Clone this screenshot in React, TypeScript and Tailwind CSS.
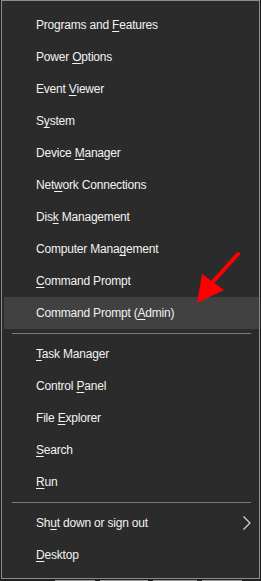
import React from 'react'

type Item = { pre: string; key: string; post: string; active?: boolean; sub?: boolean }

const groups: Item[][] = [
  [
    { pre: 'Programs and ', key: 'F', post: 'eatures' },
    { pre: 'Power ', key: 'O', post: 'ptions' },
    { pre: 'Event ', key: 'V', post: 'iewer' },
    { pre: 'S', key: 'y', post: 'stem' },
    { pre: 'Device ', key: 'M', post: 'anager' },
    { pre: 'Net', key: 'w', post: 'ork Connections' },
    { pre: 'Dis', key: 'k', post: ' Management' },
    { pre: 'Computer Mana', key: 'g', post: 'ement' },
    { pre: '', key: 'C', post: 'ommand Prompt' },
    { pre: 'Command Prompt (', key: 'A', post: 'dmin)', active: true },
  ],
  [
    { pre: '', key: 'T', post: 'ask Manager' },
    { pre: 'Control ', key: 'P', post: 'anel' },
    { pre: 'File ', key: 'E', post: 'xplorer' },
    { pre: '', key: 'S', post: 'earch' },
    { pre: '', key: 'R', post: 'un' },
  ],
  [
    { pre: 'Sh', key: 'u', post: 't down or sign out', sub: true },
    { pre: '', key: 'D', post: 'esktop' },
  ],
]

function Row({ item }: { item: Item }) {
  return (
    <div
      className={`h-[32px] flex items-center pl-[32px] pr-[8px] ${item.active ? 'bg-[#414141]' : ''}`}
    >
      <span className="flex-1 whitespace-pre">
        {item.pre}
        <span className="underline underline-offset-[2px] decoration-1">{item.key}</span>
        {item.post}
      </span>
      {item.sub && (
        <svg width="8" height="14" viewBox="0 0 8 14">
          <polyline points="0.5,0.5 7,7 0.5,13.5" fill="none" stroke="#d8d8d8" strokeWidth="1.2" />
        </svg>
      )}
    </div>
  )
}

export default function App() {
  return (
    <div className="relative w-[261px] h-[581px] bg-[#1e1e1e] overflow-hidden">
      {/* menu panel */}
      <div
        className="ml-[1px] w-[259px] h-[579px] border border-[#8c8c8c] bg-[#2b2b2b] pt-[8px] pl-[2px] text-[12px] tracking-[-0.2px] text-[#f2f2f2]"
        style={{ fontFamily: '"Liberation Sans", Arial, sans-serif' }}
      >
        {groups.map((g, gi) => (
          <div key={gi}>
            {gi > 0 && <div className="my-[4px] mx-[8px] h-px bg-[#7a7a7a]" />}
            {g.map((it) => (
              <Row key={it.pre + it.key + it.post} item={it} />
            ))}
          </div>
        ))}
      </div>

      {/* taskbar peeking below */}
      <div className="mt-[1px] h-px flex">
        <div className="w-[55px]" />
        <div className="w-[40px] bg-[#9a9a9a]" />
        <div className="w-[5px]" />
        <div className="w-[48px] bg-[#9a9a9a]" />
        <div className="w-[5px]" />
        <div className="w-[44px] bg-[#9a9a9a]" />
        <div className="w-[5px]" />
        <div className="w-[40px] bg-[#9a9a9a]" />
      </div>

      {/* red annotation arrow */}
      <svg
        className="absolute left-0 top-0 pointer-events-none"
        width="261"
        height="581"
        viewBox="0 0 261 581"
      >
        <line x1="238" y1="254" x2="211" y2="284" stroke="#ff0000" strokeWidth="4" strokeLinecap="round" />
        <polygon points="197,303 202,274 224,290" fill="#ff0000" />
      </svg>
    </div>
  )
}
